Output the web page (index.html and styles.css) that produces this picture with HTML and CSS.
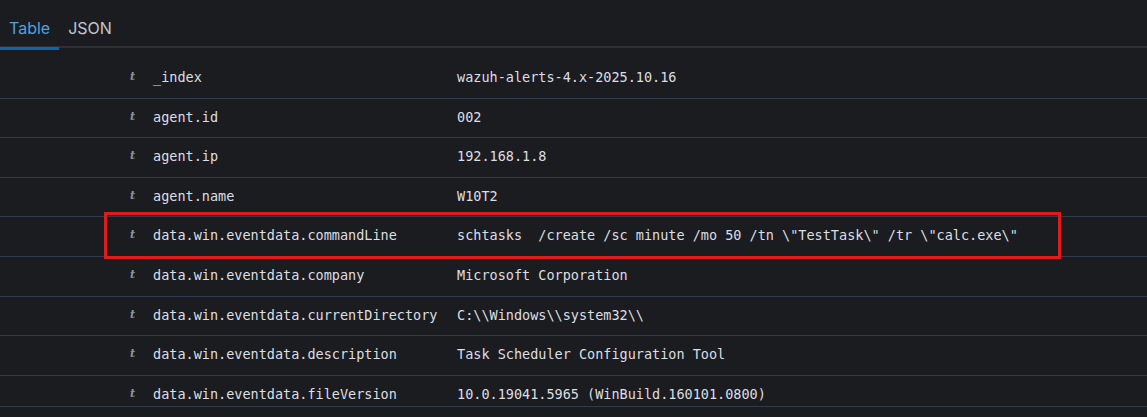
FILE: index.html
```html
<!DOCTYPE html>
<html lang="en">
<head>
<meta charset="utf-8">
<link rel="stylesheet" href="styles.css">
</head>
<body>
<div class="tabs">
  <div class="tab tab--active">Table</div>
  <div class="tab">JSON</div>
</div>
<div class="doc-wrap">
  <div class="doc">
    <div class="row"><span class="type">t</span><span class="name">_index</span><span class="value">wazuh-alerts-4.x-2025.10.16</span></div>
    <div class="row"><span class="type">t</span><span class="name">agent.id</span><span class="value">002</span></div>
    <div class="row"><span class="type">t</span><span class="name">agent.ip</span><span class="value">192.168.1.8</span></div>
    <div class="row"><span class="type">t</span><span class="name">agent.name</span><span class="value">W10T2</span></div>
    <div class="row row--marked"><span class="type">t</span><span class="name">data.win.eventdata.commandLine</span><span class="value">schtasks  /create /sc minute /mo 50 /tn \"TestTask\" /tr \"calc.exe\"</span><span class="mark"></span></div>
    <div class="row"><span class="type">t</span><span class="name">data.win.eventdata.company</span><span class="value">Microsoft Corporation</span></div>
    <div class="row"><span class="type">t</span><span class="name">data.win.eventdata.currentDirectory</span><span class="value">C:\\Windows\\system32\\</span></div>
    <div class="row"><span class="type">t</span><span class="name">data.win.eventdata.description</span><span class="value">Task Scheduler Configuration Tool</span></div>
    <div class="row"><span class="type">t</span><span class="name">data.win.eventdata.fileVersion</span><span class="value">10.0.19041.5965 (WinBuild.160101.0800)</span></div>
  </div>
</div>
</body>
</html>
```
FILE: styles.css
```css
html, body {
  margin: 0;
  padding: 0;
  background: #1b1c1f;
  height: 100%;
  overflow: hidden;
}
body {
  font-family: Inter, "Liberation Sans", sans-serif;
  color: #dfe5ef;
}
.tabs {
  display: flex;
  border-bottom: 2px solid #2f3034;
  height: 48px;
  box-sizing: border-box;
  margin-bottom: 11px;
}
.tab {
  padding: 6px 9px 0 9px;
  height: 50px;
  box-sizing: border-box;
  line-height: 44px;
  font-size: 16px;
  color: #c2c6cc;
  margin-bottom: -2px;
  border-bottom: 3px solid transparent;
}
.tab--active {
  color: #4aa3e0;
  border-bottom-color: #0e64a6;
}
.doc-wrap {
  height: 348px;
  box-sizing: border-box;
  overflow: hidden;
  border-bottom: 1px solid #313b4b;
}
.doc {
  font-family: "DejaVu Sans Mono", "Liberation Mono", monospace;
  font-size: 13.5px;
}
.row {
  position: relative;
  display: flex;
  align-items: flex-start;
  height: 39.6px;
  box-sizing: border-box;
  padding-top: 8px;
  line-height: 20px;
  border-bottom: 1px solid #313b4b;
}
.type {
  width: 20px;
  margin-left: 130px;
  margin-right: 3px;
  font-family: "DejaVu Serif", "Liberation Serif", serif;
  font-style: italic;
  font-weight: bold;
  font-size: 11px;
  color: #8e939b;
}
.name {
  width: 304px;
  white-space: pre;
  color: #dcdfe4;
}
.value {
  white-space: pre;
  color: #dcdfe4;
}
.mark {
  position: absolute;
  left: 104px;
  top: -5px;
  width: 957px;
  height: 47px;
  box-sizing: border-box;
  border: 3px solid #e01b1b;
  pointer-events: none;
}
```
